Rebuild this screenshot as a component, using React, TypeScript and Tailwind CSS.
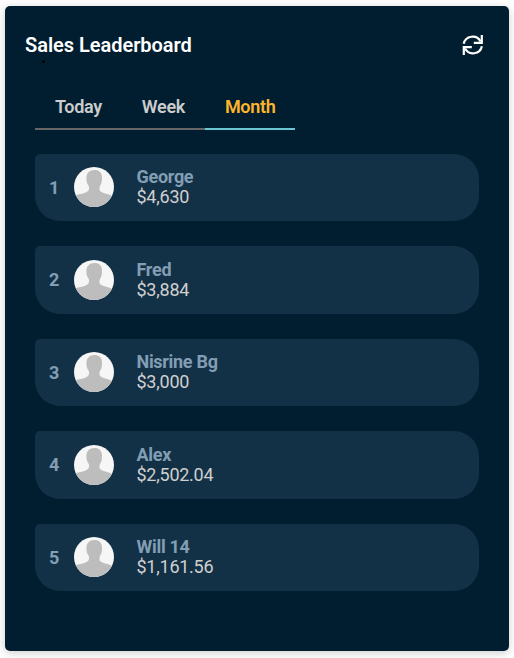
import { useState } from "react";

type Seller = {
	name: string;
	total: string;
};

const tabs = ["Today", "Week", "Month"];

const sellers: Seller[] = [
	{ name: "George", total: "$4,630" },
	{ name: "Fred", total: "$3,884" },
	{ name: "Nisrine Bg", total: "$3,000" },
	{ name: "Alex", total: "$2,502.04" },
	{ name: "Will 14", total: "$1,161.56" },
];

const RefreshIcon = () => (
	<svg
		className="block"
		width="22"
		height="22"
		viewBox="0 0 22 22"
		fill="none"
		stroke="currentColor"
		strokeWidth="2.2"
	>
		<path d="M1.7 9.8A9.1 9.1 0 0 1 18.6 7.4" />
		<path d="M19.8 1V8.8H11.8" />
		<path d="M19.9 12.2A9.1 9.1 0 0 1 3 14.6" />
		<path d="M1.8 21V13.2H9.8" />
	</svg>
);

const Avatar = () => (
	<svg className="block size-10 rounded-full" viewBox="0 0 40 40">
		<rect width="40" height="40" fill="#f6f6f6" />
		<path
			d="M20.5 3C25 3 28 5.6 28 10.5C28 14 27.8 16.5 26 19C25.2 21 25.2 23.2 26.6 24.6C30 27 36 27.2 40 30V40H0V29C4 27.2 10 27 13.4 24.6C15.2 23.2 15.4 21 14.8 19C12.8 16.5 12.4 14 12.4 11C12.4 6 15.5 3 20.5 3Z"
			fill="#bdbdbd"
		/>
	</svg>
);

const SellerRow: React.FC<{ seller: Seller; rank: number }> = ({ seller, rank }) => (
	<li className="flex h-[67.5px] items-center rounded-[25px] rounded-tl-[5px] bg-[#133146] pb-[0.5px] pl-3.5 text-lg leading-5">
		<span className="w-[25px] pt-[1.5px] font-bold text-[#829eb4]">{rank}</span>
		<Avatar />
		<div className="ml-[22.5px]">
			<div className="font-bold tracking-[-0.3px] text-[#829eb4]">{seller.name}</div>
			<div className="tracking-[-0.25px] text-[#cfcfcf]">{seller.total}</div>
		</div>
	</li>
);

const App: React.FC = () => {
	const [active, setActive] = useState<string>("Month");

	return (
		<div className="h-[658px] w-[514px] overflow-hidden bg-white pl-[5px] pt-1.5 font-['Roboto',sans-serif]">
			<div className="relative h-[645px] w-[504px] rounded-[5px] bg-[#001e2f] shadow-[0_2px_10px_rgba(0,0,0,0.2)]">
				<div className="flex h-[78px] items-center justify-between pl-5 pr-[25px]">
					<h1 className="text-xl font-semibold tracking-[-0.03px] text-white">Sales Leaderboard</h1>
					<button className="text-white" aria-label="Refresh">
						<RefreshIcon />
					</button>
				</div>
				<span className="absolute left-[37px] top-[54px] size-[3px] rounded-full bg-black" />
				<div className="ml-[30px] mt-px flex">
					{tabs.map((tab) => (
						<button
							key={tab}
							onClick={() => setActive(tab)}
							className={
								tab === active
									? "h-[45px] border-b-2 border-[#6bc5d2] px-5 text-lg font-semibold tracking-[-0.33px] text-[#ffb52b]"
									: "h-[45px] border-b-2 border-[#666666] px-5 text-lg font-semibold tracking-[-0.33px] text-[#cccccc]"
							}
						>
							{tab}
						</button>
					))}
				</div>
				<ul className="ml-[30px] mt-[23.5px] flex w-[444px] flex-col gap-[25px]">
					{sellers.map((seller, i) => (
						<SellerRow key={seller.name} seller={seller} rank={i + 1} />
					))}
				</ul>
			</div>
		</div>
	);
};

export default App;
